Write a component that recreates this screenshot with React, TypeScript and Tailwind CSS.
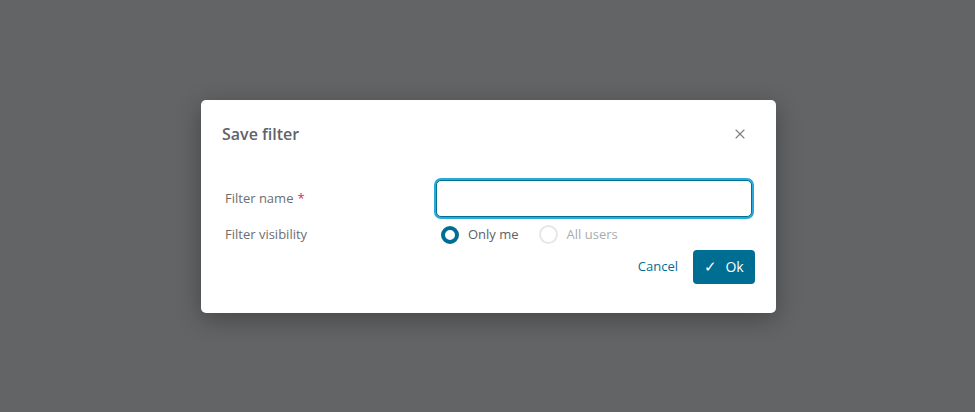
import { X } from "lucide-react";

export default function App() {
  return (
    <div
      className="flex h-[412px] w-full items-center justify-center bg-[#636465]"
      style={{ fontFamily: '"Open Sans", "Noto Sans", sans-serif' }}
    >
      <div className="ml-[2px] flex h-[213px] w-[575px] flex-col rounded-[5px] bg-white px-[21px] pt-[21px] shadow-[0_6px_24px_rgba(0,0,0,0.3)]">
        <div className="flex h-[27px] items-center justify-between">
          <h2 className="text-[16px] font-semibold text-[#5f636a]">Save filter</h2>
          <button className="mr-[7px] text-[#7a7d82]">
            <X size={16} strokeWidth={1.6} />
          </button>
        </div>

        <div className="mt-[32px] grid grid-cols-[214px_1fr]">
          <label className="flex h-[37px] items-center pl-[3px] pt-[1px] text-[13px] text-[#6b6e72]">
            Filter name
            <span className="ml-[4px] text-[#e0245e]">*</span>
          </label>
          <div className="pr-[3px]">
            <input
              type="text"
              className="h-[37px] w-full rounded-[5px] border border-[#00708f] bg-white px-2 text-[13px] outline-none ring-2 ring-[#2aa9dc]"
            />
          </div>

          <div className="flex h-[36px] items-center pl-[3px] text-[13px] text-[#6b6e72]">
            Filter visibility
          </div>
          <div className="flex h-[36px] items-center gap-[20px] pl-[5px] text-[13px]">
            <label className="flex items-center gap-[9px] text-[#5c6066]">
              <span className="h-[18px] w-[18px] rounded-full border-[4px] border-[#006e93]" />
              Only me
            </label>
            <label className="flex items-center gap-[9px] text-[#a9acb0]">
              <span className="h-[19px] w-[19px] rounded-full border-2 border-[#e6e7e9]" />
              All users
            </label>
          </div>
        </div>

        <div className="mt-[-3px] flex items-center justify-end gap-[15px]">
          <button className="text-[13px] text-[#006e93]">Cancel</button>
          <button className="flex h-[34px] w-[62px] items-center justify-center gap-[8px] rounded-[4px] bg-[#006e93] text-[14px] text-white">
            <span className="text-[15px] font-light">✓</span>
            Ok
          </button>
        </div>
      </div>
    </div>
  );
}
